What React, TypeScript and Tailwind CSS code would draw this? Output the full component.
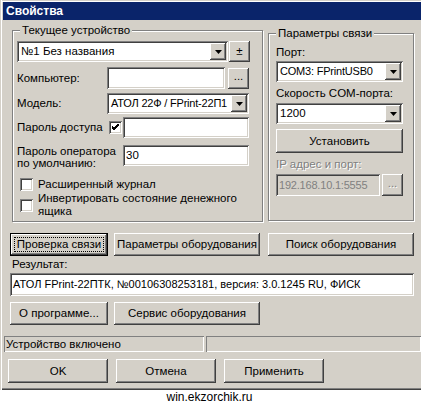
// Device properties dialog (Windows classic look)
import type { ReactNode } from 'react';

const raised =
  'shadow-[inset_-1px_-1px_#404040,inset_1px_1px_#ffffff,inset_-2px_-2px_#808080,inset_2px_2px_#d4d0c8]';
const sunken =
  'shadow-[inset_1px_1px_#808080,inset_-1px_-1px_#ffffff,inset_2px_2px_#404040,inset_-2px_-2px_#d4d0c8]';

function Button({ children, className = '', disabled = false }: { children: ReactNode; className?: string; disabled?: boolean }) {
  return (
    <div
      className={`flex items-center justify-center bg-[#d4d0c8] ${raised} ${
        disabled ? 'text-[#808080] [text-shadow:1px_1px_#ffffff]' : ''
      } ${className}`}
    >
      {children}
    </div>
  );
}

function Arrow() {
  return (
    <svg width="7" height="4" viewBox="0 0 7 4">
      <polygon points="0,0 7,0 3.5,4" fill="#000" />
    </svg>
  );
}

function Combo({ text, className = '' }: { text: string; className?: string }) {
  return (
    <div className={`flex bg-white p-[2px] ${sunken} ${className}`}>
      <div className="flex-1 flex items-center pl-[2px] overflow-hidden whitespace-nowrap">{text}</div>
      <div className={`w-[16px] flex items-center justify-center bg-[#d4d0c8] ${raised}`}>
        <Arrow />
      </div>
    </div>
  );
}

function Field({ text = '', className = '', disabled = false }: { text?: string; className?: string; disabled?: boolean }) {
  return (
    <div
      className={`flex items-center pl-[3px] whitespace-nowrap overflow-hidden ${sunken} ${
        disabled ? 'bg-[#d4d0c8] text-[#808080]' : 'bg-white'
      } ${className}`}
    >
      {text}
    </div>
  );
}

function Check({ checked = false }: { checked?: boolean }) {
  return (
    <div className={`w-[13px] h-[13px] shrink-0 bg-white flex items-center justify-center ${sunken}`}>
      {checked && (
        <svg width="7" height="7" viewBox="0 0 7 7">
          <path d="M0 2 L2 4 L7 -1 M0 3 L2 5 L7 0 M0 4 L2 6 L7 1" stroke="#000" strokeWidth="1" fill="none" />
        </svg>
      )}
    </div>
  );
}

function Group({ title, className = '', children }: { title: string; className?: string; children: ReactNode }) {
  return (
    <div className={`relative border border-[#808080] shadow-[inset_1px_1px_#ffffff,1px_1px_#ffffff] ${className}`}>
      <div className="absolute top-[-7px] left-[7px] px-[2px] bg-[#d4d0c8]">{title}</div>
      {children}
    </div>
  );
}

export default function App() {
  return (
    <div className="w-[421px] h-[405px] bg-white overflow-hidden font-['Liberation_Sans',Arial,sans-serif] text-[11.5px] leading-[13px] text-black">
      <div className="w-[421px] h-[390px] flex flex-col bg-[#d4d0c8] pl-[3px] pt-[2px] shadow-[inset_1px_0_#d4d0c8,inset_2px_0_#ffffff,inset_0_1px_#d4d0c8,inset_0_2px_#ffffff,inset_0_-1px_#404040,inset_0_-2px_#808080]">
        <div className="h-[18px] shrink-0 flex items-center pl-[3px] bg-[#0a246a] text-white font-bold text-[12px]">
          Свойства
        </div>

        <div className="flex items-start mt-[10px] ml-[9px]">
          <Group title="Текущее устройство" className="w-[251px] h-[192px] pl-[4px] pt-[10px]">
            <div className="flex">
              <Combo text="№1 Без названия" className="w-[211px] h-[21px]" />
              <Button className="ml-[1px] w-[21px] h-[21px]">±</Button>
            </div>
            <div className="flex items-center mt-[5px]">
              <div className="w-[90px]">Компьютер:</div>
              <Field className="w-[118px] h-[22px]" />
              <Button className="ml-[3px] w-[21px] h-[21px] pb-[4px]">...</Button>
            </div>
            <div className="flex items-center mt-[4px]">
              <div className="w-[90px]">Модель:</div>
              <Combo text="АТОЛ 22Ф / FPrint-22П1" className="w-[142px] h-[21px] text-[11px] tracking-[-0.2px]" />
            </div>
            <div className="flex items-center mt-[3px]">
              <div className="w-[92px]">Пароль доступа</div>
              <Check checked />
              <Field className="ml-[1px] w-[126px] h-[21px]" />
            </div>
            <div className="flex items-start mt-[7px] h-[24px]">
              <div className="w-[106px] leading-[12px]">
                Пароль оператора
                <br />
                по умолчанию:
              </div>
              <Field text="30" className="w-[126px] h-[21px]" />
            </div>
            <div className="flex items-center mt-[9px] pl-[3px]">
              <Check />
              <div className="ml-[5px]">Расширенный журнал</div>
            </div>
            <div className="flex items-center mt-[1px] pl-[3px]">
              <Check />
              <div className="ml-[5px]">
                Инвертировать состояние денежного
                <br />
                ящика
              </div>
            </div>
          </Group>

          <Group title="Параметры связи" className="ml-[5px] mt-[3px] w-[146px] h-[188px] pl-[7px] pt-[12px]">
            <div>Порт:</div>
            <Combo text="COM3: FPrintUSB0" className="mt-[2px] w-[127px] h-[21px] text-[11px] tracking-[-0.2px]" />
            <div className="mt-[5px]">Скорость COM-порта:</div>
            <Combo text="1200" className="mt-[3px] w-[127px] h-[21px]" />
            <Button className="mt-[5px] w-[127px] h-[24px]">Установить</Button>
            <div className="mt-[5px] text-[#808080] [text-shadow:1px_1px_#ffffff]">IP адрес и порт:</div>
            <div className="flex mt-[3px]">
              <Field text="192.168.10.1:5555" disabled className="w-[104px] h-[22px] text-[11px] tracking-[-0.2px]" />
              <Button disabled className="ml-[2px] w-[21px] h-[22px] pb-[4px]">...</Button>
            </div>
          </Group>
        </div>

        <div className="flex mt-[11px] ml-[7px]">
          <div className="relative w-[98px] h-[23px] border border-black">
            <Button className="w-full h-full">Проверка связи</Button>
            <div className="absolute inset-[3px] border border-dotted border-black" />
          </div>
          <Button className="ml-[6px] w-[146px] h-[23px]">Параметры оборудования</Button>
          <Button className="ml-[8px] w-[146px] h-[23px]">Поиск оборудования</Button>
        </div>

        <div className="mt-[2px] ml-[9px]">Результат:</div>
        <Field
          text="АТОЛ FPrint-22ПТК, №00106308253181, версия: 3.0.1245 RU, ФИСК"
          className="mt-[2px] ml-[7px] w-[404px] h-[23px] text-[11px]"
        />

        <div className="flex mt-[6px] ml-[7px]">
          <Button className="w-[98px] h-[23px]">О программе...</Button>
          <Button className="ml-[6px] w-[146px] h-[23px]">Сервис оборудования</Button>
        </div>

        <div className="flex mt-[11px] ml-[1px] h-[16px]">
          <div className="w-[200px] flex items-center pl-[2px] shadow-[inset_1px_1px_#808080,inset_-1px_-1px_#ffffff]">
            Устройство включено
          </div>
          <div className="ml-[2px] flex-1 shadow-[inset_1px_1px_#808080,inset_-1px_-1px_#ffffff]" />
        </div>

        <div className="flex mt-[7px] ml-[5px]">
          <Button className="w-[100px] h-[24px]">OK</Button>
          <Button className="ml-[8px] w-[100px] h-[24px]">Отмена</Button>
          <Button className="ml-[8px] w-[100px] h-[24px]">Применить</Button>
        </div>
      </div>
      <div className="h-[15px] flex items-center justify-center text-[12px] pr-[2px]">win.ekzorchik.ru</div>
    </div>
  );
}
